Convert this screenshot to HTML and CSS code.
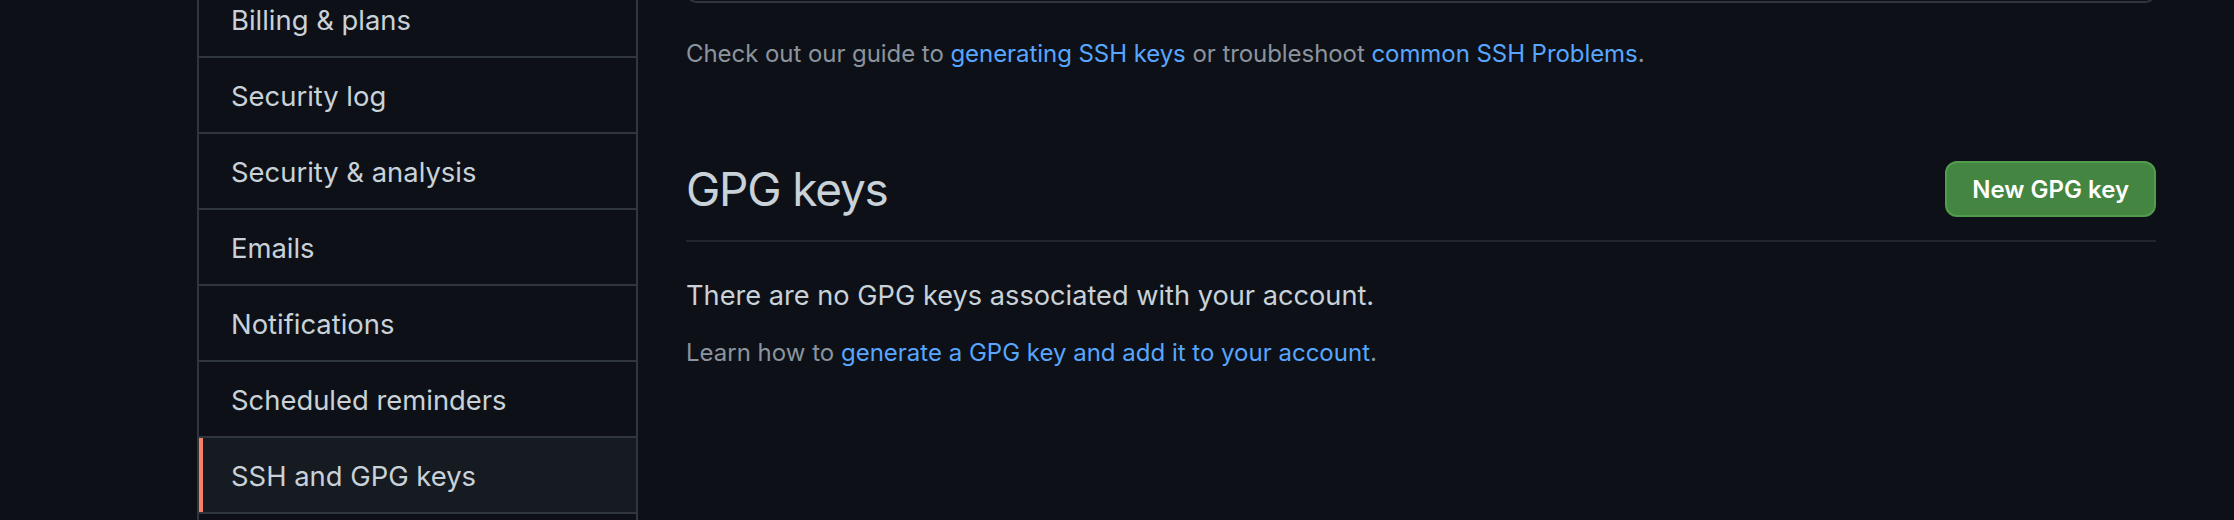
FILE: index.html
```html
<!DOCTYPE html>
<html lang="en">
<head>
<meta charset="utf-8">
<title>SSH and GPG keys</title>
<link rel="stylesheet" href="styles.css">
</head>
<body>
<div class="page">
  <nav class="sidebar">
    <a class="menu-item" href="#">Billing &amp; plans</a>
    <a class="menu-item" href="#">Security log</a>
    <a class="menu-item" href="#">Security &amp; analysis</a>
    <a class="menu-item" href="#">Emails</a>
    <a class="menu-item" href="#">Notifications</a>
    <a class="menu-item" href="#">Scheduled reminders</a>
    <a class="menu-item selected" href="#">SSH and GPG keys</a>
  </nav>
  <main class="content">
    <div class="keys-box"></div>
    <p class="note guide">Check out our guide to <a href="#">generating SSH keys</a> or troubleshoot <a href="#">common SSH Problems</a>.</p>
    <div class="subhead">
      <h2 class="subhead-heading">GPG keys</h2>
      <a class="btn-primary" href="#">New GPG key</a>
    </div>
    <p class="blank">There are no GPG keys associated with your account.</p>
    <p class="note learn">Learn how to <a href="#">generate a GPG key and add it to your account</a>.</p>
  </main>
</div>
</body>
</html>
```
FILE: styles.css
```css
html, body {
  margin: 0;
  padding: 0;
  background: #0d1117;
  overflow: hidden;
}
body {
  font-family: Inter, "Noto Sans", "DejaVu Sans", sans-serif;
  color: #c9d1d9;
}
a { text-decoration: none; }

.page {
  display: flex;
  align-items: flex-start;
  margin-top: -18px;
  padding-left: 197px;
  padding-right: 78px;
}

.sidebar {
  width: 441px;
  flex: none;
  box-sizing: border-box;
  border-left: 2px solid #30363d;
  border-right: 2px solid #30363d;
  padding-bottom: 40px;
  display: flex;
  flex-direction: column;
}
.menu-item {
  display: block;
  font-size: 27.4px;
  line-height: 40px;
  padding: 18px 32px 16px;
  color: #c9d1d9;
  border-bottom: 2px solid #30363d;
}
.menu-item.selected {
  background: #161b22;
  box-shadow: inset 4px 0 0 #f78166;
}

.content {
  flex: 1;
  margin-left: 48px;
}
.keys-box {
  height: 21px;
  box-sizing: border-box;
  border: 2px solid #30363d;
  border-radius: 12px;
}
.note {
  margin: 33px 0 0;
  font-size: 24px;
  line-height: 36px;
  color: #8b949e;
}
.note a { color: #58a6ff; }
.guide { letter-spacing: -0.06px; }

.subhead {
  display: flex;
  align-items: center;
  justify-content: space-between;
  margin-top: 81px;
  padding-bottom: 15px;
  border-bottom: 2px solid #21262d;
}
.subhead-heading {
  margin: 0;
  font-size: 46px;
  line-height: 72px;
  font-weight: 400;
  letter-spacing: -1.2px;
  color: #c9d1d9;
}
.btn-primary {
  display: flex;
  align-items: center;
  height: 56px;
  box-sizing: border-box;
  padding: 0 25px;
  font-size: 24px;
  font-weight: 600;
  color: #ffffff;
  background: #438541;
  border: 2px solid #529c4d;
  border-radius: 12px;
}
.blank {
  margin: 33px 0 0;
  font-size: 27.2px;
  line-height: 42px;
  color: #c9d1d9;
}
.learn { margin-top: 18px; }
```
